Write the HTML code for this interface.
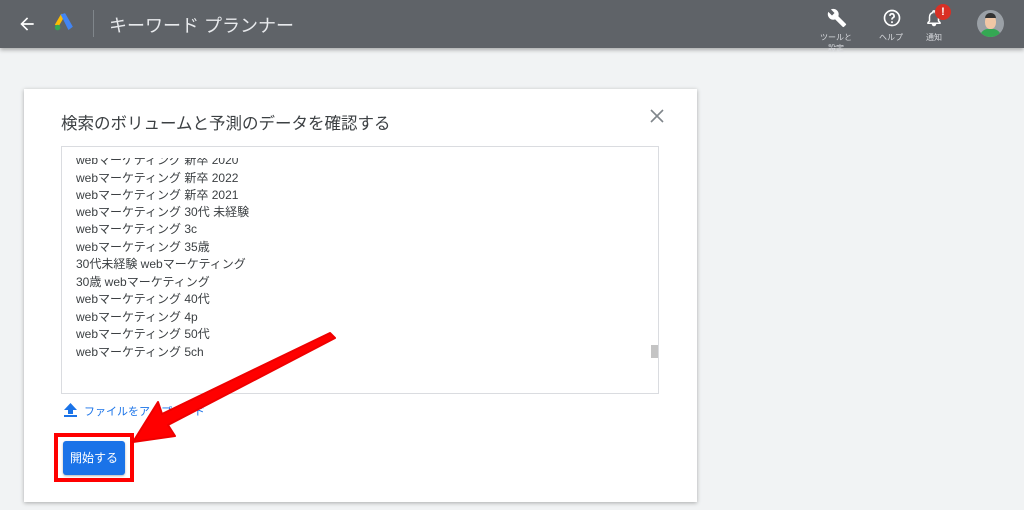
<!DOCTYPE html>
<html><head><meta charset="utf-8"><style>
*{margin:0;padding:0;box-sizing:border-box}
body{width:1024px;height:510px;overflow:hidden;background:#f1f3f4;font-family:"Liberation Sans","Noto Sans CJK JP",sans-serif;position:relative}
.hdr{position:absolute;left:0;top:0;width:1024px;height:48px;background:#5f6368;box-shadow:0 2px 4px rgba(0,0,0,.3)}
.t{position:absolute;color:#fff;white-space:nowrap}
.dlg{position:absolute;left:24px;top:89px;width:673px;height:413px;background:#fff;box-shadow:0 1px 4px rgba(0,0,0,.3)}
.ta{position:absolute;left:61px;top:146px;width:598px;height:248px;border:1px solid #dadce0;overflow:hidden}
.ta div{position:absolute;left:14px;font-size:12px;color:#3c4043;line-height:17px}
</style></head><body>
<div class="hdr">
<svg style="position:absolute;left:17px;top:14px" width="20" height="20" viewBox="0 0 24 24"><path d="M20 11H7.8l5.6-5.6L12 4l-8 8 8 8 1.4-1.4L7.8 13H20z" fill="#fff"/></svg>
<svg style="position:absolute;left:53px;top:11px" width="22" height="22" viewBox="0 0 24 24"><path d="M9 3l-7 12 4 2 7-12z" fill="#fbbc04"/><path d="M9 4l4-1 8 14-4 3z" fill="#4285f4" stroke="#4285f4" stroke-width="1" stroke-linejoin="round"/><circle cx="5" cy="18" r="3" fill="#34a853"/></svg>
<div style="position:absolute;left:93px;top:10px;width:1px;height:27px;background:#80868b"></div>
<div class="t" style="left:109px;top:12px;font-size:18px;color:#e8eaed">キーワード プランナー</div>
<svg style="position:absolute;left:827px;top:8px" width="20" height="20" viewBox="0 0 24 24"><path d="M22.7 19l-9.1-9.1c.9-2.3.4-5-1.5-6.9-2-2-5-2.4-7.4-1.3L9 6 6 9 1.6 4.7C.4 7.1.9 10.1 2.9 12.1c1.9 1.9 4.6 2.4 6.9 1.5l9.1 9.1c.4.4 1 .4 1.4 0l2.3-2.3c.5-.4.5-1.1.1-1.4z" fill="#fff"/></svg>
<div class="t" style="left:820px;top:32px;font-size:8px;color:#dadce0;text-align:center;line-height:11px">ツールと<br>設定</div>
<svg style="position:absolute;left:882px;top:8px" width="20" height="20" viewBox="0 0 24 24"><circle cx="12" cy="12" r="9" fill="none" stroke="#fff" stroke-width="2"/><path d="M9.5 9.5a2.5 2.5 0 1 1 3.5 2.3c-.7.4-1 .9-1 1.7v.5" fill="none" stroke="#fff" stroke-width="2"/><circle cx="12" cy="17" r="1.2" fill="#fff"/></svg>
<div class="t" style="left:879px;top:32px;font-size:8px;color:#dadce0">ヘルプ</div>
<svg style="position:absolute;left:925px;top:9px" width="18" height="18" viewBox="0 0 24 24"><path d="M12 22c1.1 0 2-.9 2-2h-4c0 1.1.9 2 2 2zm6-6v-5c0-3.1-1.6-5.6-4.5-6.3V4a1.5 1.5 0 0 0-3 0v.7C7.6 5.4 6 7.9 6 11v5l-2 2v1h16v-1z" fill="none" stroke="#fff" stroke-width="2"/></svg>
<div style="position:absolute;left:935px;top:4px;width:16px;height:16px;border-radius:50%;background:#d93025;color:#fff;font-size:11px;font-weight:bold;text-align:center;line-height:16px">!</div>
<div class="t" style="left:926px;top:32px;font-size:8px;color:#dadce0">通知</div>
<div style="position:absolute;left:977px;top:10px;width:27px;height:27px;border-radius:50%;background:#9aa0a6;overflow:hidden"><div style="position:absolute;left:8px;top:5px;width:11px;height:14px;border-radius:45%;background:#f1c7a5"></div><div style="position:absolute;left:8px;top:3px;width:11px;height:5px;border-radius:5px 5px 0 0;background:#333"></div><div style="position:absolute;left:3px;top:19px;width:21px;height:12px;border-radius:8px 8px 0 0;background:#34a853"></div></div>
</div>
<div class="dlg"></div>
<div class="t" style="left:61px;top:110px;font-size:16.5px;color:#3c4043">検索のボリュームと予測のデータを確認する</div>
<svg style="position:absolute;left:650px;top:109px" width="14" height="14" viewBox="0 0 14 14"><path d="M1 1l12 12M13 1L1 13" stroke="#80868b" stroke-width="1.6"/></svg>
<div class="ta">
<div style="top:5px;clip-path:inset(6px 0 0 0)">webマーケティング 新卒 2020</div>
<div style="top:23px">webマーケティング 新卒 2022</div>
<div style="top:40px">webマーケティング 新卒 2021</div>
<div style="top:57px">webマーケティング 30代 未経験</div>
<div style="top:74px">webマーケティング 3c</div>
<div style="top:92px">webマーケティング 35歳</div>
<div style="top:109px">30代未経験 webマーケティング</div>
<div style="top:127px">30歳 webマーケティング</div>
<div style="top:144px">webマーケティング 40代</div>
<div style="top:162px">webマーケティング 4p</div>
<div style="top:179px">webマーケティング 50代</div>
<div style="top:197px">webマーケティング 5ch</div>
<div style="left:589px;top:198px;width:7px;height:13px;background:#c4c4c4"></div>
</div>
<svg style="position:absolute;left:64px;top:403px" width="13" height="14" viewBox="0 0 13 14"><path d="M6.5 0L0 7h4v4h5V7h4z" fill="#1a73e8"/><rect x="0" y="12" width="13" height="2" fill="#1a73e8"/></svg>
<div class="t" style="left:84px;top:403px;font-size:11px;color:#1a73e8">ファイルをアップロード</div>
<div style="position:absolute;left:54px;top:433px;width:80px;height:49px;border:4px solid #f00"></div>
<div style="position:absolute;left:63px;top:441px;width:62px;height:34px;background:#1a73e8;border-radius:3px;box-shadow:0 1px 2px rgba(0,0,0,.3);color:#fff;font-size:12px;text-align:center;line-height:34px">開始する</div>
<svg style="position:absolute;left:0;top:0" width="1024" height="510"><polygon points="330,333 335,338 168,425 175,436 133,442 158,402 162,414" fill="#f00" stroke="#e00" stroke-width="2" stroke-linejoin="round"/></svg>
</body></html>
